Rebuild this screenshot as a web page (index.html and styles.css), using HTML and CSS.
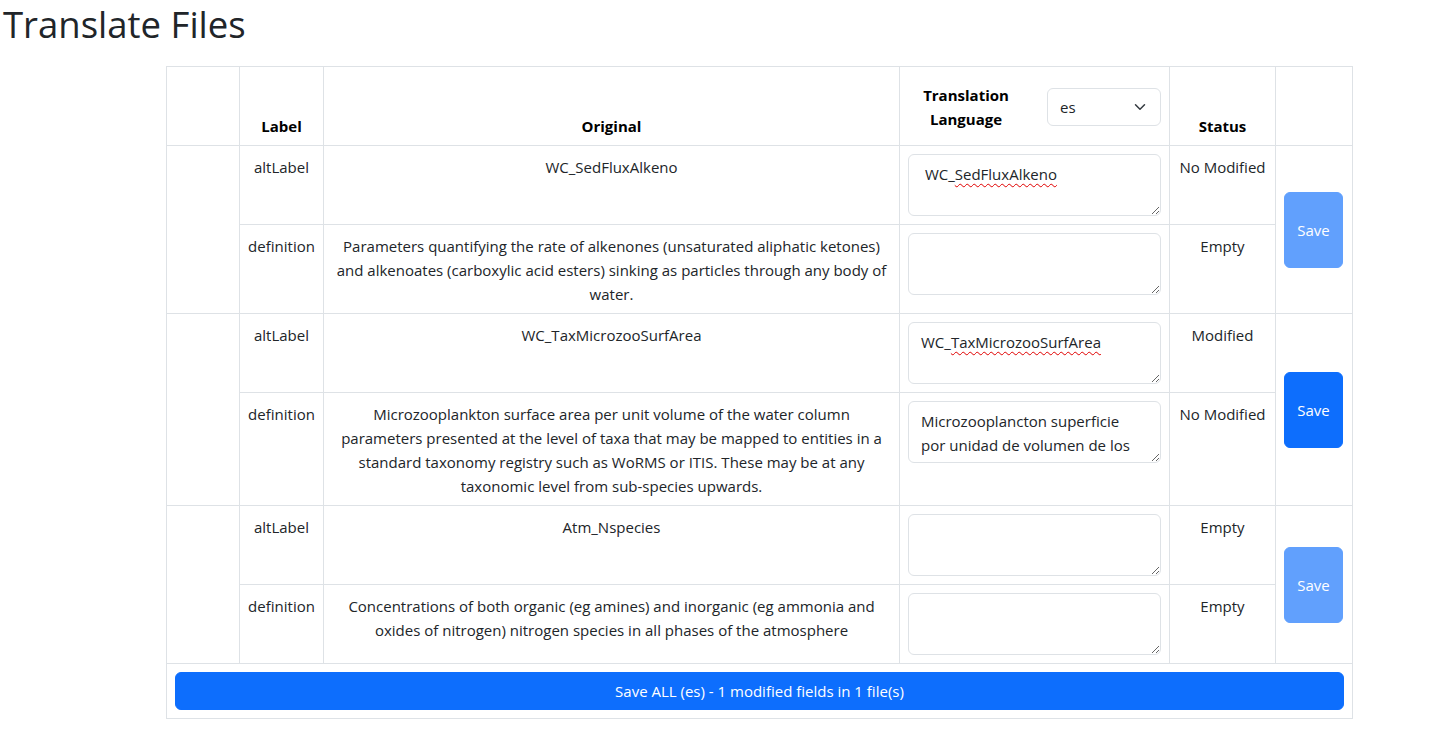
FILE: index.html
```html
<!DOCTYPE html>
<html lang="en">
<head>
<meta charset="utf-8">
<title>Translate Files</title>
<link rel="stylesheet" href="styles.css">
</head>
<body>
<h1 class="page-title">Translate Files</h1>
<table class="tt">
  <colgroup>
    <col class="c1"><col class="c2"><col class="c3"><col class="c4"><col class="c5"><col class="c6">
  </colgroup>
  <thead>
    <tr>
      <th></th>
      <th>Label</th>
      <th>Original</th>
      <th>
        <div class="lang">
          <span class="lang-label">Translation Language</span>
          <div class="select">
            <span>es</span>
            <svg class="chev" width="16" height="12" viewBox="0 0 16 16"><path d="m2 5 6 6 6-6" fill="none" stroke="#343a40" stroke-width="2" stroke-linecap="round" stroke-linejoin="round"/></svg>
          </div>
        </div>
      </th>
      <th>Status</th>
      <th></th>
    </tr>
  </thead>
  <tbody>
    <tr>
      <td rowspan="2"></td>
      <td>altLabel</td>
      <td>WC_SedFluxAlkeno</td>
      <td class="ta-cell"><div class="ta">&nbsp;WC_<span class="sp">SedFluxAlkeno</span></div></td>
      <td>No Modified</td>
      <td rowspan="2" class="btn-cell"><button class="save disabled">Save</button></td>
    </tr>
    <tr>
      <td>definition</td>
      <td>Parameters quantifying the rate of alkenones (unsaturated aliphatic ketones) and alkenoates (carboxylic acid esters) sinking as particles through any body of water.</td>
      <td class="ta-cell"><div class="ta"></div></td>
      <td>Empty</td>
    </tr>
    <tr>
      <td rowspan="2"></td>
      <td>altLabel</td>
      <td>WC_TaxMicrozooSurfArea</td>
      <td class="ta-cell"><div class="ta">WC_<span class="sp">TaxMicrozooSurfArea</span></div></td>
      <td>Modified</td>
      <td rowspan="2" class="btn-cell"><button class="save">Save</button></td>
    </tr>
    <tr>
      <td>definition</td>
      <td>Microzooplankton surface area per unit volume of the water column parameters presented at the level of taxa that may be mapped to entities in a standard taxonomy registry such as WoRMS or ITIS. These may be at any taxonomic level from sub-species upwards.</td>
      <td class="ta-cell"><div class="ta">Microzooplancton superficie por unidad de volumen de los</div></td>
      <td>No Modified</td>
    </tr>
    <tr>
      <td rowspan="2"></td>
      <td>altLabel</td>
      <td>Atm_Nspecies</td>
      <td class="ta-cell"><div class="ta"></div></td>
      <td>Empty</td>
      <td rowspan="2" class="btn-cell"><button class="save disabled">Save</button></td>
    </tr>
    <tr>
      <td>definition</td>
      <td>Concentrations of both organic (eg amines) and inorganic (eg ammonia and oxides of nitrogen) nitrogen species in all phases of the atmosphere</td>
      <td class="ta-cell"><div class="ta"></div></td>
      <td>Empty</td>
    </tr>
    <tr>
      <td colspan="6" class="foot"><button class="save-all">Save ALL (es) - 1 modified fields in 1 file(s)</button></td>
    </tr>
  </tbody>
</table>
</body>
</html>
```

FILE: styles.css
```css
* { box-sizing: border-box; }
body {
  margin: 0;
  font-family: "Open Sans", "Noto Sans", sans-serif;
  font-size: 15px;
  line-height: 24px;
  color: #212529;
  background: #fff;
}
.page-title {
  margin: 0 0 18px 3px;
  font-size: 36.5px;
  font-weight: 400;
  line-height: 48px;
  color: #212529;
}
.tt {
  margin-left: 166px;
  width: 1186px;
  border-collapse: collapse;
  table-layout: fixed;
}
.c1 { width: 73px; }
.c2 { width: 84px; }
.c3 { width: 576px; }
.c4 { width: 270px; }
.c5 { width: 106px; }
.c6 { width: 77px; }
.tt th, .tt td {
  border: 1px solid #dee2e6;
  padding: 9px 8px 7px;
  text-align: center;
}
.tt th {
  vertical-align: bottom;
  font-weight: 700;
  color: #000;
}
.tt td { vertical-align: top; }
.tt td.ta-cell { padding: 8px; }
.lang {
  display: flex;
  align-items: center;
  justify-content: space-between;
  height: 62px;
  padding: 7px 0 7px;
}
.lang-label {
  width: 116px;
  text-align: center;
}
.select {
  width: 114px;
  height: 38px;
  border: 1px solid #dee2e6;
  border-radius: 6px;
  display: flex;
  align-items: center;
  justify-content: space-between;
  padding: 0 12px;
  font-weight: 400;
  color: #212529;
  text-align: left;
}
.ta {
  height: 62px;
  border: 1px solid #dee2e6;
  border-radius: 6px;
  padding: 7px 18px 5px 12px;
  text-align: left;
  overflow: hidden;
  resize: vertical;
  color: #212529;
}
.sp {
  text-decoration: underline wavy #e00000;
  text-decoration-thickness: 1px;
  text-underline-offset: 3px;
}
.tt td.btn-cell { vertical-align: middle; padding: 8px; }
.save {
  display: block;
  width: 59px;
  height: 76px;
  border: 1px solid #0d6efd;
  border-radius: 6px;
  background: #0d6efd;
  color: #fff;
  font: inherit;
  padding: 0;
}
.save.disabled { opacity: .65; }
.tt td.foot { padding: 8px; }
.save-all {
  display: block;
  width: 100%;
  height: 38px;
  border: 1px solid #0d6efd;
  border-radius: 6px;
  background: #0d6efd;
  color: #fff;
  font: inherit;
}
```
